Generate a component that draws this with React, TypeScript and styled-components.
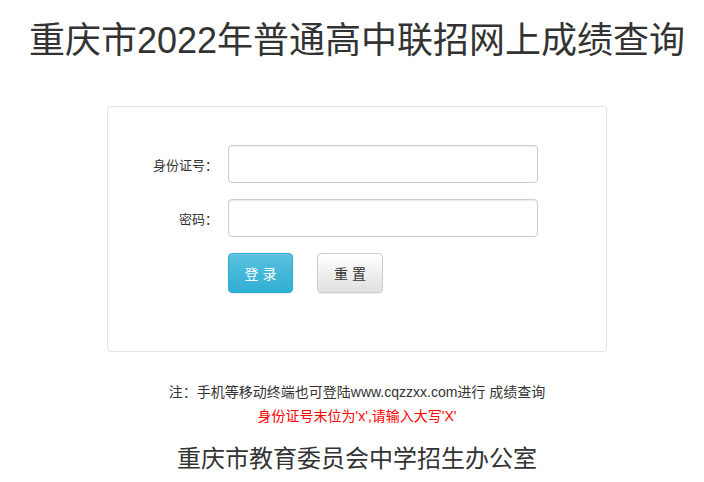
import styled, { createGlobalStyle } from "styled-components";

const GlobalStyle = createGlobalStyle`
  html, body {
    margin: 0;
    padding: 0;
    background: #fff;
  }
  body {
    font-family: "Liberation Sans", "Noto Sans CJK SC", Arial, sans-serif;
    color: #333;
  }
`;

const Page = styled.div`
  padding-left: 10px;
  display: flex;
  flex-direction: column;
  align-items: center;
`;

const Title = styled.h1`
  margin: 17px 0 0;
  font-size: 36px;
  line-height: 48px;
  font-weight: normal;
  color: #333;
  white-space: nowrap;
`;

const Card = styled.div`
  margin-top: 41px;
  width: 500px;
  box-sizing: border-box;
  border: 1px solid #e3e3e3;
  border-radius: 4px;
  padding: 38px 0 58px 10px;
  display: flex;
  flex-direction: column;
  gap: 16px;
`;

const Row = styled.div`
  display: flex;
  align-items: center;
  gap: 10px;
`;

const Label = styled.label`
  width: 100px;
  text-align: right;
  font-size: 13px;
  color: #333;
`;

const Input = styled.input`
  width: 310px;
  height: 38px;
  box-sizing: border-box;
  border: 1px solid #ccc;
  border-radius: 4px;
  box-shadow: inset 0 1px 1px rgba(0, 0, 0, 0.075);
  padding: 6px 12px;
  font-size: 14px;
  outline: none;
`;

const Buttons = styled.div`
  display: flex;
  gap: 24px;
  margin-left: 110px;
`;

const Button = styled.button<{ $primary?: boolean }>`
  width: ${(p) => (p.$primary ? "65px" : "66px")};
  height: 40px;
  box-sizing: border-box;
  border-radius: 4px;
  font-family: "Liberation Sans", "Noto Sans CJK SC", sans-serif;
  font-size: 14px;
  padding: 0;
  cursor: pointer;
  color: ${(p) => (p.$primary ? "#fff" : "#333")};
  border: 1px solid ${(p) => (p.$primary ? "#2aabd2" : "#ccc")};
  background: ${(p) =>
    p.$primary
      ? "linear-gradient(to bottom, #5bc0de 0%, #2fafd4 100%)"
      : "linear-gradient(to bottom, #fff 0%, #e0e0e0 100%)"};
  box-shadow: inset 0 1px 0 rgba(255, 255, 255, 0.15), 0 1px 1px rgba(0, 0, 0, 0.075);
`;

const Note = styled.p`
  margin: 30px 0 0;
  font-size: 14px;
  line-height: 20px;
  color: #333;
`;

const Warn = styled.p`
  margin: 4px 0 0;
  font-size: 14px;
  line-height: 20px;
  color: #f00;
`;

const Footer = styled.h2`
  margin: 16px 0 0;
  font-size: 24px;
  line-height: 34px;
  font-weight: normal;
  color: #333;
`;

export default function App() {
  return (
    <>
      <GlobalStyle />
      <Page>
        <Title>重庆市2022年普通高中联招网上成绩查询</Title>
        <Card>
          <Row>
            <Label>身份证号：</Label>
            <Input type="text" />
          </Row>
          <Row>
            <Label>密码：</Label>
            <Input type="password" />
          </Row>
          <Buttons>
            <Button $primary>登 录</Button>
            <Button>重 置</Button>
          </Buttons>
        </Card>
        <Note>注：手机等移动终端也可登陆www.cqzzxx.com进行 成绩查询</Note>
        <Warn>身份证号末位为'x',请输入大写'X'</Warn>
        <Footer>重庆市教育委员会中学招生办公室</Footer>
      </Page>
    </>
  );
}
